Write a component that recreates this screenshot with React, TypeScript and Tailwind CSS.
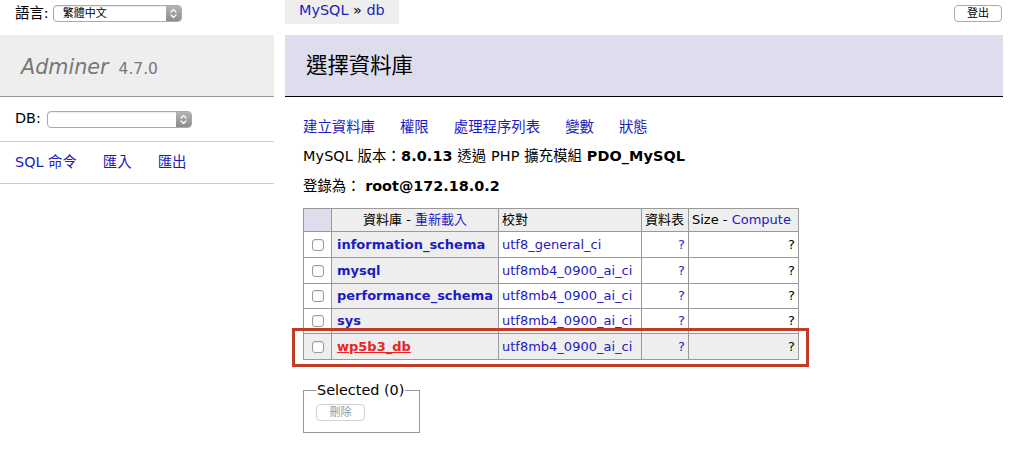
import React from 'react';

const SelectBox = ({ className, value }: { className: string; value?: string }) => (
  <div className={`flex h-[17px] items-stretch rounded-[4px] border border-[#aaa] bg-white shadow-[inset_0_1px_1px_rgba(0,0,0,0.08)] ${className}`}>
    <div className="flex flex-1 items-center pl-[9px] text-[11px] leading-none text-black">{value}</div>
    <div className="flex w-[15px] items-center justify-center rounded-r-[3px] bg-gradient-to-b from-[#b5b5b5] to-[#8d8d8d]">
      <svg width="7" height="11" viewBox="0 0 7 11" fill="none" stroke="white" strokeWidth="1.2" strokeLinecap="round" strokeLinejoin="round">
        <path d="M1 4 L3.5 1.5 L6 4" />
        <path d="M1 7 L3.5 9.5 L6 7" />
      </svg>
    </div>
  </div>
);

const CheckBox = () => (
  <span className="block h-[12px] w-[12px] rounded-[3px] border border-[#9a9a9a] bg-white shadow-[inset_0_1px_1px_rgba(0,0,0,0.08)]" />
);

const databases = [
  { name: 'information_schema', collation: 'utf8_general_ci', h: 'h-[26px]', active: false },
  { name: 'mysql', collation: 'utf8mb4_0900_ai_ci', h: 'h-[26px]', active: false },
  { name: 'performance_schema', collation: 'utf8mb4_0900_ai_ci', h: 'h-[25px]', active: false },
  { name: 'sys', collation: 'utf8mb4_0900_ai_ci', h: 'h-[25px]', active: false },
  { name: 'wp5b3_db', collation: 'utf8mb4_0900_ai_ci', h: 'h-[26px]', active: true },
];

const cols = 'grid grid-cols-[28px_167px_143px_47px_110px]';
const link = 'text-[#1b1bc2]';

export default function App() {
  return (
    <div className="flex h-[454px] w-[1024px] bg-white font-['DejaVu_Sans','Noto_Sans_CJK_TC',sans-serif] text-[14.4px] text-black">
      {/* Sidebar */}
      <div className="w-[274px] shrink-0">
        <div className="mt-[5px] flex h-[17px] items-center pl-[15px]">
          <span className="mr-[4px]">語言:</span>
          <SelectBox className="w-[129px]" value="繁體中文" />
        </div>
        <div className="mt-[13px] flex h-[62px] items-center border-b border-[#999] bg-[#eee] pl-[21px] pt-[4px]">
          <span className="text-[20.7px] italic text-[#777]">Adminer</span>
          <span className="ml-[10px] pt-[4px] text-[15.5px] text-[#777]">4.7.0</span>
        </div>
        <div className="flex h-[45px] items-center border-b border-[#ccc] pl-[15px]">
          <span className="mr-[6px]">DB:</span>
          <SelectBox className="w-[145px]" />
        </div>
        <div className="flex h-[42px] items-center gap-[26px] border-b border-[#ccc] pl-[15px] pt-[1px]">
          <span className={link}>SQL 命令</span>
          <span className={link}>匯入</span>
          <span className={link}>匯出</span>
        </div>
      </div>

      {/* Content */}
      <div className="ml-[11px] w-[718px]">
        <div className="flex items-start justify-between">
          <div className="h-[24px] bg-[#eee] px-[14px] leading-[20px]">
            <span className={link}>MySQL</span> » <span className={link}>db</span>
          </div>
          <button className="mr-[1px] mt-[5px] flex h-[17px] w-[48px] items-center justify-center rounded-[4px] border border-[#aaa] bg-white text-[11px] leading-none">
            登出
          </button>
        </div>

        <div className="mt-[11px] flex h-[62px] items-center border-b border-black bg-[#dde] pl-[21px] pt-[2px] text-[21.4px]">
          選擇資料庫
        </div>

        <div className="pl-[18px]">
          <div className="mt-[21px] flex h-[20px] items-center gap-[25px]">
            <span className={link}>建立資料庫</span>
            <span className={link}>權限</span>
            <span className={link}>處理程序列表</span>
            <span className={link}>變數</span>
            <span className={link}>狀態</span>
          </div>
          <div className="mt-[9px] flex h-[20px] items-center whitespace-pre tracking-[0.1px]">
            MySQL 版本：<b>8.0.13</b> 透過 PHP 擴充模組 <b>PDO_MySQL</b>
          </div>
          <div className="mt-[10px] flex h-[20px] items-center whitespace-pre">
            登錄為： <b>root@172.18.0.2</b>
          </div>

          {/* Database table */}
          <div className="relative mt-[11px] w-[496px] border-l border-t border-[#999] text-[13px]">
            <div className={`${cols} h-[23px]`}>
              <div className="border-b border-r border-[#999] bg-[#dde]" />
              <div className="flex items-center justify-center border-b border-r border-[#999] bg-[#eee] whitespace-pre">
                資料庫 - <span className={link}>重新載入</span>
              </div>
              <div className="flex items-center border-b border-r border-[#999] bg-[#eee] pl-[3px]">校對</div>
              <div className="flex items-center border-b border-r border-[#999] bg-[#eee] pl-[3px]">資料表</div>
              <div className="flex items-center border-b border-r border-[#999] bg-[#eee] pl-[3px] whitespace-pre">
                Size - <span className={link}>Compute</span>
              </div>
            </div>
            {databases.map((db) => (
              <div key={db.name} className={`${cols} ${db.h} ${db.active ? 'bg-[#eee]' : 'bg-white'}`}>
                <div className="flex items-center justify-center border-b border-r border-[#999]">
                  <CheckBox />
                </div>
                <div className="flex items-center border-b border-r border-[#999] bg-[#eee] pl-[5px] font-bold">
                  <span className={db.active ? 'text-[#e8261e] underline' : link}>{db.name}</span>
                </div>
                <div className="flex items-center border-b border-r border-[#999] pl-[3px]">
                  <span className={link}>{db.collation}</span>
                </div>
                <div className="flex items-center justify-end border-b border-r border-[#999] pr-[3px]">
                  <span className={link}>?</span>
                </div>
                <div className="flex items-center justify-end border-b border-r border-[#999] pr-[3px]">?</div>
              </div>
            ))}
            {/* highlight annotation */}
            <div className="pointer-events-none absolute bottom-[-7px] left-[-12px] right-[-10px] h-[39px] border-[3px] border-[#c23b27]" />
          </div>

          <fieldset className="mt-[21px] w-[117px] border border-[#999] pb-[11px] pl-[12px] pt-[5px]">
            <legend className="px-[1px] text-[14.4px] leading-[18px]">Selected (0)</legend>
            <button className="flex h-[17px] w-[49px] items-center justify-center rounded-[4px] border border-[#d0d0d0] bg-white text-[11px] leading-none text-[#999]">
              刪除
            </button>
          </fieldset>
        </div>
      </div>
    </div>
  );
}
